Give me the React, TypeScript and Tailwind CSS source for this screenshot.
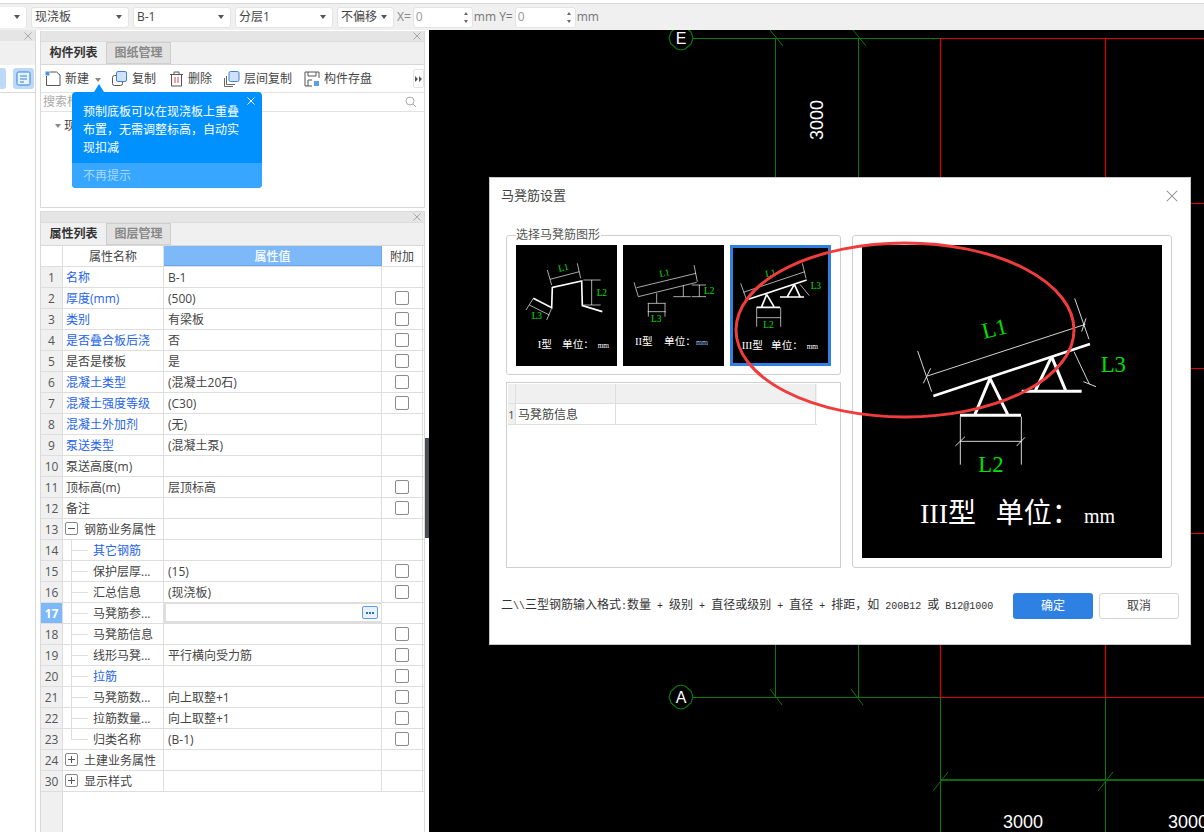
import React from "react";

const Caret = ({ c = "border-t-[#555]" }: { c?: string }) => <span className={`block w-0 h-0 border-l-[3px] border-r-[3px] border-t-[4px] border-l-transparent border-r-transparent ${c}`} />;

const Select = ({ text, w }: { text: string; w: string }) => (
  <div className={`${w} h-[21px] bg-white rounded-[3px] border border-[#e4e4e4] flex items-center justify-between pl-[3px] pr-[6px] text-[12px] text-[#444] shrink-0`}>
    <span>{text}</span>
    <Caret />
  </div>
);

const Spin = ({ w }: { w: string }) => (
  <div className={`${w} h-[21px] bg-white rounded-[3px] border border-[#e4e4e4] flex items-center justify-between pl-[2px] pr-[4px] text-[12px] text-[#999] shrink-0`}>
    <span>0</span>
    <span className="flex flex-col gap-[5px]">
      <span className="w-0 h-0 border-l-[2px] border-r-[2px] border-b-[3px] border-l-transparent border-r-transparent border-b-[#666]" />
      <span className="w-0 h-0 border-l-[2px] border-r-[2px] border-t-[3px] border-l-transparent border-r-transparent border-t-[#666]" />
    </span>
  </div>
);

const X = ({ className = "", c = "#a8a8a8", s = 8 }: { className?: string; c?: string; s?: number }) => (
  <svg width={s} height={s} viewBox="0 0 8 8" className={className}>
    <path d="M0.5 0.5L7.5 7.5M7.5 0.5L0.5 7.5" stroke={c} strokeWidth={s > 8 ? 0.7 : 1} fill="none" />
  </svg>
);

type Row = { n: string; name: string; blue?: boolean; value?: string; check?: boolean; tree?: boolean; box?: "-" | "+"; last?: boolean; active?: boolean };
const rows: Row[] = [
  { n: "1", name: "名称", blue: true, value: "B-1" },
  { n: "2", name: "厚度(mm)", blue: true, value: "(500)", check: true },
  { n: "3", name: "类别", blue: true, value: "有梁板", check: true },
  { n: "4", name: "是否叠合板后浇", blue: true, value: "否", check: true },
  { n: "5", name: "是否是楼板", value: "是", check: true },
  { n: "6", name: "混凝土类型", blue: true, value: "(混凝土20石)", check: true },
  { n: "7", name: "混凝土强度等级", blue: true, value: "(C30)", check: true },
  { n: "8", name: "混凝土外加剂", blue: true, value: "(无)" },
  { n: "9", name: "泵送类型", blue: true, value: "(混凝土泵)" },
  { n: "10", name: "泵送高度(m)" },
  { n: "11", name: "顶标高(m)", value: "层顶标高", check: true },
  { n: "12", name: "备注", check: true },
  { n: "13", name: "钢筋业务属性", box: "-" },
  { n: "14", name: "其它钢筋", blue: true, tree: true },
  { n: "15", name: "保护层厚...", value: "(15)", check: true, tree: true },
  { n: "16", name: "汇总信息", value: "(现浇板)", check: true, tree: true },
  { n: "17", name: "马凳筋参...", tree: true, active: true },
  { n: "18", name: "马凳筋信息", check: true, tree: true },
  { n: "19", name: "线形马凳...", value: "平行横向受力筋", check: true, tree: true },
  { n: "20", name: "拉筋", blue: true, check: true, tree: true },
  { n: "21", name: "马凳筋数...", value: "向上取整+1", check: true, tree: true },
  { n: "22", name: "拉筋数量...", value: "向上取整+1", check: true, tree: true },
  { n: "23", name: "归类名称", value: "(B-1)", check: true, tree: true, last: true },
  { n: "24", name: "土建业务属性", box: "+" },
  { n: "30", name: "显示样式", box: "+" },
];

const TableRow = ({ r }: { r: Row }) => (
  <div className="flex h-[21px] border-b border-[#dedede] text-[12px] leading-[22px] text-[#444]">
    <div className={`w-[22px] shrink-0 border-r border-[#dedede] text-center text-[12px] ${r.active ? "bg-[#7db9f8] text-white font-bold" : "bg-[#f0f0f0] text-[#555]"}`}>{r.n}</div>
    <div className={`w-[101px] shrink-0 border-r border-[#dedede] relative flex items-center whitespace-nowrap pt-px ${r.tree ? "pl-[30px]" : r.box ? "pl-[21px]" : "pl-[3px]"} ${r.blue ? "text-[#2563eb]" : ""}`}>
      {r.tree && <span className={`absolute left-[8px] top-0 w-[17px] border-l border-[#dedede] ${r.last ? "h-[11px] border-b" : "h-[21px]"}`} />}
      {r.tree && !r.last && <span className="absolute left-[8px] top-[10px] w-[17px] border-t border-[#dedede]" />}
      {r.box && (
        <span className="absolute left-[2px] top-[3px] w-[13px] h-[13px] border border-[#888] rounded-[2px] flex items-center justify-center text-[#555] text-[11px] leading-none">
          <svg width="7" height="7" viewBox="0 0 7 7"><path d={r.box === "-" ? "M0 3.5H7" : "M0 3.5H7M3.5 0V7"} stroke="#555" strokeWidth="1" /></svg>
        </span>
      )}
      {r.name}
    </div>
    <div className={`w-[218px] shrink-0 border-r border-[#dedede] whitespace-nowrap ${r.active ? "border-2 border-[#6aa9e9] -mt-px h-[21px] flex items-center justify-end pr-[3px] bg-white" : "pl-[4px]"}`}>
      {r.active ? (
        <span className="w-[16px] h-[13px] rounded-[2px] border border-[#5b9fe6] bg-[#e8f1fb] flex items-center justify-center gap-[1px]">
          <i className="w-[2px] h-[2px] bg-[#2f70c0]" /><i className="w-[2px] h-[2px] bg-[#2f70c0]" /><i className="w-[2px] h-[2px] bg-[#2f70c0]" />
        </span>
      ) : r.value}
    </div>
    <div className="w-[41px] shrink-0 border-r border-[#dedede] flex items-center justify-center">
      {r.check && <span className="w-[14px] h-[14px] border border-[#8a8a8a] rounded-[2px] bg-white" />}
    </div>
  </div>
);

const PanelHeader = () => (
  <div className="h-[11px] bg-[#e5e5e5] flex items-center justify-end pr-[3px] border-b border-[#dcdcdc] shrink-0">
    <X />
  </div>
);

const Tabs = ({ a, b }: { a: string; b: string }) => (
  <div className="flex h-[23px] bg-[#f0f0f0] border-b border-[#d8d8d8] text-[12px] font-medium shrink-0">
    <div className="w-[65px] text-center leading-[22px] text-[#333] font-bold">{a}</div>
    <div className="w-[65px] text-center leading-[20px] text-[#888] bg-[#e2e2e2] border border-[#cfcfcf] font-bold">{b}</div>
  </div>
);

const ToolBtn = ({ icon, label, cls }: { icon: React.ReactNode; label: string; cls: string }) => (
  <div className={`flex items-center gap-[4px] ${cls}`}>
    {icon}
    <span>{label}</span>
  </div>
);

const Black = ({ children, vb, selected }: { children: React.ReactNode; vb: string; selected?: boolean }) => (
  <div className={`w-[101px] h-[121px] bg-black ${selected ? "border-[3px] border-[#2f80e3]" : ""}`}>
    <svg viewBox={vb} className="w-full h-full block">{children}</svg>
  </div>
);

const Cad = ({ d, w = 2 }: { d: string; w?: number }) => <path d={d} stroke="#fff" strokeWidth={w} fill="none" />;
const G = ({ x, y, t, s = 28, rot }: { x: number; y: number; t: string; s?: number; rot?: number }) => (
  <text x={x} y={y} fill="#00e000" fontSize={s} fontFamily="'Liberation Serif',serif" transform={rot ? `rotate(${rot} ${x} ${y})` : undefined}>{t}</text>
);
const Cap = ({ x, y, t, s = 32, fill = "#fff" }: { x: number; y: number; t: string; s?: number; fill?: string }) => (
  <text x={x} y={y} fill={fill} fontSize={s} fontFamily="'Liberation Serif','Noto Sans CJK SC',serif">{t}</text>
);

const Circle = ({ cx, cy, t }: { cx: number; cy: number; t: string }) => (
  <g>
    <polygon
      points={`${cx - 4},${cy - 11} ${cx},${cy - 12} ${cx + 4},${cy - 11} ${cx + 10},${cy - 6} ${cx + 12},${cy} ${cx + 10},${cy + 6} ${cx + 4},${cy + 11} ${cx},${cy + 12} ${cx - 4},${cy + 11} ${cx - 10},${cy + 6} ${cx - 12},${cy} ${cx - 10},${cy - 6}`}
      fill="none" stroke="#0a7a0a" strokeWidth="1.2" />
    <text x={cx} y={cy + 6} textAnchor="middle" fill="#fff" fontSize="16" fontFamily="'Liberation Sans',sans-serif">{t}</text>
  </g>
);

const M = ({ children }: { children: React.ReactNode }) => (
  <span className="text-[10px] [font-family:'Liberation_Mono',monospace]">{children}</span>
);

export default function App() {
  return (
    <div className="w-[1204px] h-[832px] relative overflow-hidden bg-white flex flex-col [font-family:'Open_Sans','Noto_Sans_CJK_SC',sans-serif]">
      {/* top bar */}
      <div className="h-[27px] shrink-0 mt-[3px] border-t border-[#d9d9d9] bg-[#f0f0f0] flex items-center gap-[4px] overflow-hidden">
        <div className="w-[27px] shrink-0 h-[21px] bg-white rounded-r-[3px] border-r border-[#e4e4e4] flex items-center justify-end pr-[6px]"><Caret /></div>
        <Select text="现浇板" w="w-[98px]" />
        <Select text="B-1" w="w-[98px]" />
        <Select text="分层1" w="w-[98px]" />
        <Select text="不偏移" w="w-[57px]" />
        <span className="text-[12px] text-[#888] -ml-[1px] -mr-[2px]">X=</span>
        <Spin w="w-[60px]" />
        <span className="text-[12px] text-[#777] -ml-[3px] -mr-[2px]">mm Y=</span>
        <Spin w="w-[61px]" />
        <span className="text-[12px] text-[#777] -ml-[3px]">mm</span>
      </div>

      <div className="flex flex-1 min-h-0">
        {/* left narrow */}
        <div className="w-[36px] shrink-0 border-r border-[#d9d9d9] flex flex-col">
          <div className="h-[11px] bg-[#e5e5e5] flex items-center justify-end pr-[3px]"><X /></div>
          <div className="h-[24px] bg-[#f0f0f0]" />
          <div className="h-[28px] border-b border-[#d9d9d9] flex items-center justify-between">
            <span className="w-[6px] h-[21px] bg-[#bcd9f7] rounded-r-[3px]" />
            <span className="w-[21px] h-[21px] bg-[#bcd9f7] rounded-[3px] mr-[1px] flex items-center justify-center">
              <svg width="15" height="15" viewBox="0 0 15 15"><rect x="1" y="1" width="13" height="13" rx="1.5" fill="#e8f2fc" stroke="#2f80e3" /><path d="M4 5H11M4 8H11M4 11H8" stroke="#2f80e3" /></svg>
            </span>
          </div>
        </div>

        {/* middle */}
        <div className="w-[393px] shrink-0 pl-[4px] pr-[3px] pt-px flex flex-col relative">
          <div className="h-[177px] w-[385px] border border-[#d9d9d9] border-t-0 flex flex-col shrink-0 bg-white">
            <PanelHeader />
            <Tabs a="构件列表" b="图纸管理" />
            <div className="h-[28px] flex items-center border-b border-[#e2e2e2] text-[12px] text-[#444] relative shrink-0">
              <ToolBtn cls="ml-[4px]" label="新建" icon={
                <svg width="16" height="16" viewBox="0 0 16 16"><path d="M1.5 5V14.5H15V4L11.5 1H5" fill="none" stroke="#555" /><rect x="0.5" y="0.5" width="4" height="4" fill="#4f93e6" /></svg>} />
              <span className="ml-[6px] mt-[3px] flex"><Caret c="border-t-[#888]" /></span>
              <ToolBtn cls="ml-[11px]" label="复制" icon={
                <svg width="16" height="16" viewBox="0 0 16 16"><rect x="0.5" y="4.5" width="10" height="10" rx="2" fill="#fff" stroke="#555" /><rect x="4.5" y="0.5" width="10" height="10" rx="1.5" fill="#cfe2f9" stroke="#3f83d8" /></svg>} />
              <ToolBtn cls="ml-[13px]" label="删除" icon={
                <svg width="15" height="16" viewBox="0 0 15 16"><path d="M1 3.5H14M5 3V1H10V3M2.5 3.5V15H12.5V3.5" fill="none" stroke="#555" /><path d="M6 6V12M9 6V12" stroke="#e04040" /></svg>} />
              <ToolBtn cls="ml-[12px]" label="层间复制" icon={
                <svg width="16" height="16" viewBox="0 0 16 16"><path d="M0.5 7V15.5H9M2.5 5V13.5H11" fill="none" stroke="#666" /><rect x="5" y="0.5" width="10" height="10" rx="1.5" fill="#cfe2f9" stroke="#3f83d8" /></svg>} />
              <ToolBtn cls="ml-[12px]" label="构件存盘" icon={
                <svg width="16" height="16" viewBox="0 0 16 16"><path d="M15 7V1H1V15H8" fill="none" stroke="#555" /><path d="M4 1V5H12V1M4 15V9H8" fill="none" stroke="#555" /><rect x="10" y="10" width="5" height="5" fill="#5b9fe6" /></svg>} />
              <span className="absolute right-0 top-[4px] w-[11px] h-[19px] border border-[#e4e4e4] rounded-[2px] flex items-center justify-center">
                <svg width="7" height="6" viewBox="0 0 7 6"><path d="M0 0L3 3L0 6ZM4 0L7 3L4 6Z" fill="#555" /></svg>
              </span>
            </div>
            <div className="h-[19px] flex items-center justify-between px-[2px] pr-[7px] border-b border-[#e2e2e2] text-[12px] text-[#aaa] shrink-0">
              <span>搜索构件...</span>
              <svg width="12" height="12" viewBox="0 0 12 12"><circle cx="5" cy="5" r="4" fill="none" stroke="#aaa" /><path d="M8 8L11 11" stroke="#aaa" /></svg>
            </div>
            <div className="flex-1 flex items-start pl-[14px] pt-[5px] gap-[3px] text-[12px] text-[#444]">
              <span className="mt-[7px] flex"><Caret c="border-t-[#888]" /></span><span>现浇板</span>
            </div>
          </div>

          <div className="mt-[3px] w-[385px] flex-1 border border-[#d9d9d9] border-b-0 flex flex-col min-h-0">
            <PanelHeader />
            <Tabs a="属性列表" b="图层管理" />
            <div className="flex h-[21px] border-b border-[#dedede] text-[12px] leading-[22px] text-[#444] shrink-0">
              <div className="w-[22px] border-r border-[#dedede]" />
              <div className="w-[101px] border-r border-[#dedede] text-center">属性名称</div>
              <div className="w-[218px] bg-[#7db9f8] text-white text-center border-r border-b border-[#6aa9e9] font-medium">属性值</div>
              <div className="w-[41px] border-r border-[#dedede] text-center">附加</div>
            </div>
            {rows.map((r) => <TableRow key={r.n} r={r} />)}
            <div className="flex-1 w-[22px] bg-[#f0f0f0] border-r border-[#dedede]" />
          </div>

          {/* splitter handle */}
          <span className="absolute right-0 top-[408px] w-[4px] h-[100px] bg-[#4a4f55]" />

          {/* tooltip */}
          <div className="absolute left-[36px] top-[62px] w-[190px] h-[96px] rounded-[4px] bg-[#0091ff] text-white text-[12px] leading-[18px] flex flex-col">
            <span className="absolute left-[22px] -top-[8px] w-0 h-0 border-l-[5px] border-r-[5px] border-b-[8px] border-l-transparent border-r-transparent border-b-[#0091ff]" />
            <X className="absolute right-[7px] top-[5px]" c="#fff" />
            <div className="flex-1 pl-[11px] pr-[20px] pt-[11px]">预制底板可以在现浇板上重叠布置，无需调整标高，自动实现扣减</div>
            <div className="h-[25px] bg-[#36a6ff] rounded-b-[4px] pl-[11px] leading-[25px] text-[#a9d8ff]">不再提示</div>
          </div>
        </div>

        {/* canvas */}
        <div className="flex-1 bg-black min-w-0">
          <svg viewBox="429 30 775 802" className="w-full h-full block">
            <path d="M693 38.5H940M693 697.5H940" stroke="#0a7a0a" strokeWidth="1.2" fill="none" />
            <path d="M775.5 38V697M858.5 38V697M940.5 697V832M1105.5 697V832" stroke="#0a7a0a" fill="none" />
            <path d="M770 30L783 46M853 30L866 46M770 689L782 705M851 689L863 705" stroke="#0a7a0a" fill="none" />
            <path d="M940 38.5H1204M940 697.5H1204M1190 203.5H1204M1190 368.5H1204M1190 533.5H1204M940.5 38V697M1105.5 38V697" stroke="#e00000" strokeWidth="1.2" fill="none" />
            <path d="M940 780H1204" stroke="#0a6a0a" strokeWidth="2" />
            <path d="M933 791L948 772M1098 791L1113 772" stroke="#0a7a0a" fill="none" />
            <Circle cx={681} cy={38} t="E" />
            <Circle cx={681} cy={697} t="A" />
            <text x="823" y="140" transform="rotate(-90 823 140)" fill="#fff" fontSize="18" fontFamily="'Liberation Sans',sans-serif">3000</text>
            <text x="1003" y="828" fill="#fff" fontSize="18" fontFamily="'Liberation Sans',sans-serif">3000</text>
            <text x="1168" y="828" fill="#fff" fontSize="18" fontFamily="'Liberation Sans',sans-serif">3000</text>
          </svg>
        </div>
      </div>

      {/* dialog */}
      <div className="absolute left-[489px] top-[177px] w-[702px] h-[468px] bg-white border border-[#c8c8c8] flex flex-col text-[12px] text-[#444]">
        <div className="h-[36px] shrink-0 flex items-center justify-between pl-[11px] pr-[12px] text-[13px] text-[#444]">
          <span>马凳筋设置</span>
          <X s={12} c="#888" />
        </div>
        <div className="flex gap-[11px] pl-[16px] mt-[21px]">
          <div className="w-[335px] flex flex-col gap-[7px]">
            <div className="h-[140px] relative border border-[#cfcfcf] rounded-[3px] flex gap-[6px] pl-[9px] pt-[9px]">
              <span className="absolute left-[9px] -top-[9px] bg-white pr-[1px] leading-[16px] text-[#555]">选择马凳筋图形</span>
              <Black vb="78 210 303 363">
                <Cad w={5} d="M130 370L185 398L187 337L275 318L277 392L337 410" />
                <Cad d="M180 313L268 290M172 285L185 330M262 265L272 310M305 315V390M280 315H332M280 390H332M108 405L130 370M170 435L185 400M118 390L178 420" />
                <G x={207} y={290} t="L1" rot={-12} />
                <G x={320} y={362} t="L2" />
                <G x={125} y={431} t="L3" />
                <Cap x={143} y={520} t="I型" />
                <Cap x={216} y={520} t="单位：" />
                <Cap x={323} y={520} t="mm" s={22} />
              </Black>
              <Black vb="399 210 303 363">
                <Cad d="M440 338L618 295M445 365L620 322M432 322L445 365M612 270L622 320M500 355V385M473 385H527M473 410H527M475 385V425M525 385V425M580 330V365M550 365H602M605 330H648M605 365H648M628 330V365" />
                <G x={510} y={306} t="L1" rot={-10} />
                <G x={642} y={358} t="L2" />
                <G x={483} y={440} t="L3" />
                <Cap x={435} y={510} t="II型" />
                <Cap x={522} y={510} t="单位：" />
                <Cap x={618} y={510} t="mm" s={23} fill="#9ac8ff" />
              </Black>
              <Black vb="729 219 285 345" selected>
                <Cad w={5} d="M775 373L950 315M830 358L815 395M830 358L852 395M800 397H870M913 328L892 365M913 328L930 365M870 366H942" />
                <Cad d="M760 352L945 290M752 325L770 375M937 265L948 310M930 328L958 362M800 397V455M872 397V455M800 428H872" />
                <G x={828} y={306} t="L1" rot={-10} />
                <G x={820} y={460} t="L2" />
                <G x={962} y={343} t="L3" />
                <Cap x={755} y={523} t="III型" />
                <Cap x={843} y={523} t="单位：" />
                <Cap x={950} y={523} t="mm" s={22} />
              </Black>
            </div>
            <div className="h-[186px] border border-[#cfcfcf] p-px">
              <div className="flex h-[20px] bg-[#f0f0f0] border-b border-[#dedede] w-[309px]">
                <div className="w-[8px] border-r border-[#dedede]" />
                <div className="w-[100px] border-r border-[#dedede]" />
                <div className="w-[200px] border-r border-[#dedede]" />
              </div>
              <div className="flex h-[21px] border-b border-[#dedede] w-[309px] leading-[22px]">
                <div className="w-[8px] shrink-0 border-r border-[#dedede] bg-[#f0f0f0] text-[11px] text-center">1</div>
                <div className="w-[100px] shrink-0 border-r border-[#dedede] pl-[2px]">马凳筋信息</div>
                <div className="w-[200px] shrink-0 border-r border-[#dedede]" />
              </div>
            </div>
          </div>
          <div className="w-[320px] h-[333px] border border-[#cfcfcf] rounded-[3px] p-[9px]">
            <svg viewBox="36 45 900 939" className="w-[300px] h-[313px] block bg-black">
              <Cad w={8} d="M250 498L720 342" />
              <Cad w={2.5} d="M232 438L706 283M203 363L245 485M674 205L717 328M220 460L242 415M695 305L708 265M672 365L718 462M700 455L738 470M331 560V704M514 560V704M331 634H514M316 648L345 620M500 648L525 622" />
              <Cad w={9} d="M420 445L375 553M420 445L473 553M330 556H513M605 380L555 484M605 380L648 484M515 484H695" />
              <G x={402} y={327} t="L1" s={68} rot={-14} />
              <G x={385} y={725} t="L2" s={68} />
              <G x={752} y={425} t="L3" s={68} />
              <Cap x={210} y={880} t="III型" s={84} />
              <Cap x={437} y={880} t="单位：" s={84} />
              <Cap x={702} y={880} t="mm" s={60} />
            </svg>
          </div>
        </div>
        <div className="flex items-center mt-[23px] pl-[11px]">
          <span className="text-[12px] leading-[26px] text-[#333] whitespace-pre w-[512px] mt-px">
            二<M>\\</M>三型钢筋输入格式<M>:</M>数量<M> + </M>级别<M> + </M>直径或级别<M> + </M>直径<M> + </M>排距，如<M> 200B12 </M>或<M> B12@1000</M>
          </span>
          <button className="w-[80px] h-[26px] bg-[#2f80e3] text-white rounded-[3px] text-[12px]">确定</button>
          <button className="ml-[6px] w-[80px] h-[26px] bg-white border border-[#d4d4d4] rounded-[3px] text-[12px] text-[#444]">取消</button>
        </div>
      </div>

      {/* hand-drawn annotation */}
      <svg className="absolute left-[730px] top-[238px] pointer-events-none" width="350" height="186" viewBox="730 238 350 186">
        <ellipse cx="905" cy="330" rx="169" ry="87" fill="none" stroke="#f03c3c" strokeWidth="3" />
      </svg>
    </div>
  );
}
